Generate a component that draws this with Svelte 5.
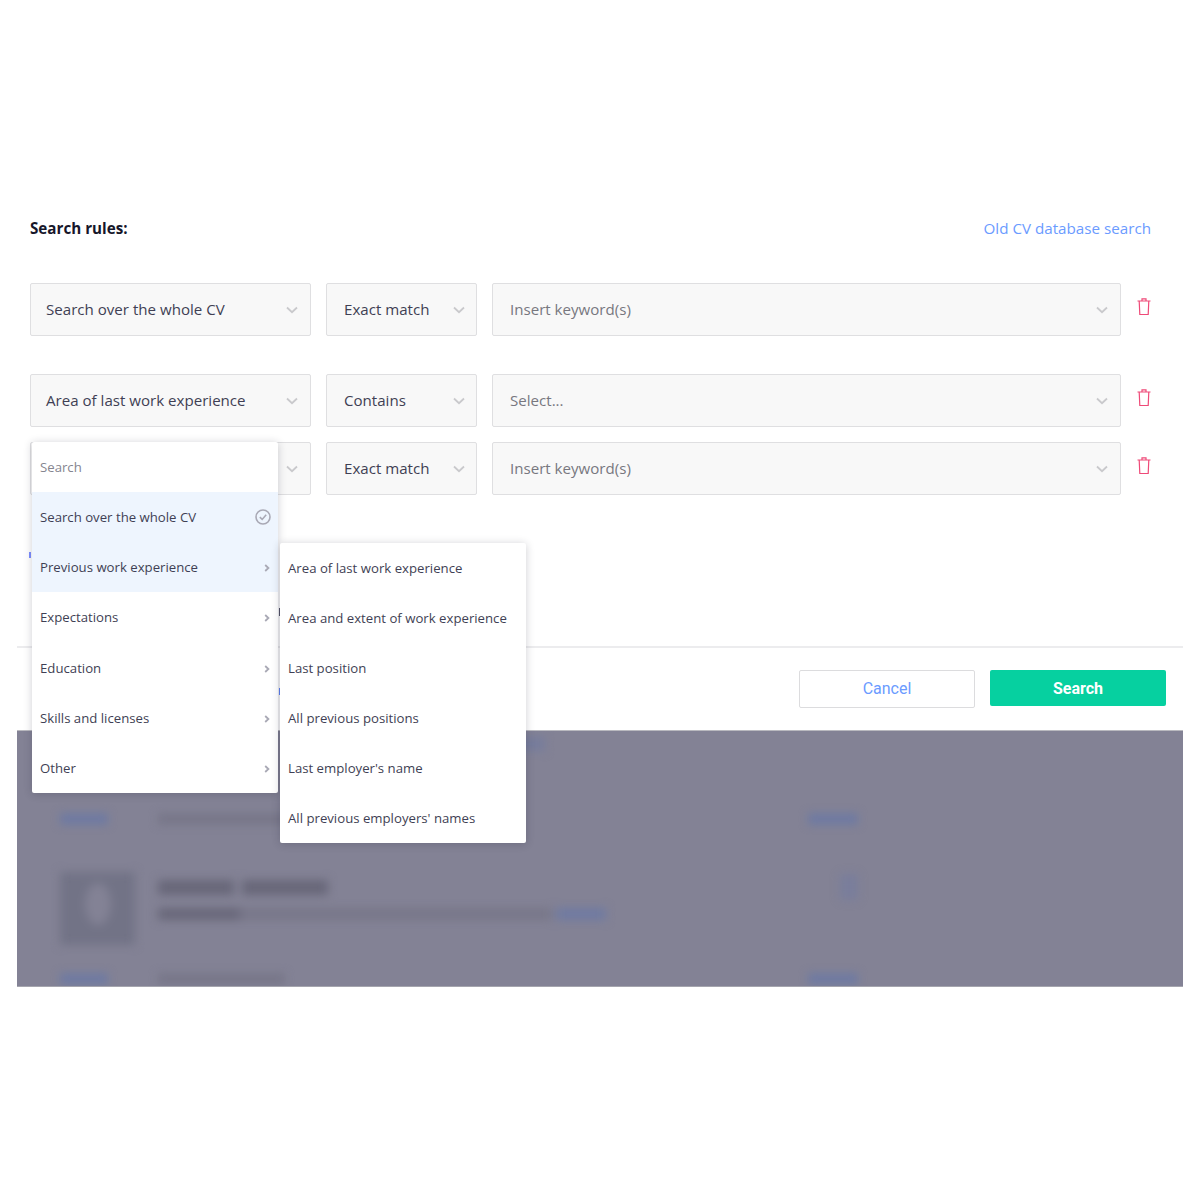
<script>
  const rules = [
    { field: "Search over the whole CV", match: "Exact match", value: "Insert keyword(s)" },
    { field: "Area of last work experience", match: "Contains", value: "Select..." },
    { field: "", match: "Exact match", value: "Insert keyword(s)" }
  ];

  const groups = [
    { label: "Search over the whole CV", selected: true, active: true },
    { label: "Previous work experience", active: true },
    { label: "Expectations" },
    { label: "Education" },
    { label: "Skills and licenses" },
    { label: "Other" }
  ];

  const subItems = [
    "Area of last work experience",
    "Area and extent of work experience",
    "Last position",
    "All previous positions",
    "Last employer's name",
    "All previous employers' names"
  ];

  const blurredRows = [
    { left: 48, middle: 132, right: 50 },
    { left: 48, middle: 127, right: 50 }
  ];
</script>

<div class="page">
  <div class="modal">
    <div class="form">
      <div class="head">
        <h2>Search rules:</h2>
        <a href="#old">Old CV database search</a>
      </div>

      <div class="rules">
        {#each rules as rule}
          <div class="rule">
            <div class="select field">
              <span class="val">{rule.field}</span>
              <svg class="chev" viewBox="0 0 12 8" width="12" height="8"><path d="M1 1.5 6 6.2 11 1.5" /></svg>
            </div>
            <div class="select match">
              <span class="val">{rule.match}</span>
              <svg class="chev" viewBox="0 0 12 8" width="12" height="8"><path d="M1 1.5 6 6.2 11 1.5" /></svg>
            </div>
            <div class="select keywords">
              <span class="placeholder">{rule.value}</span>
              <svg class="chev" viewBox="0 0 12 8" width="12" height="8"><path d="M1 1.5 6 6.2 11 1.5" /></svg>
            </div>
            <svg class="trash" viewBox="0 0 14 18" width="14" height="18">
              <path d="M0.5 3H13.5M2.2 3 2.8 16.5H11.2L11.8 3M5 3V0.8H9V3" />
            </svg>
          </div>
        {/each}
      </div>

      <!-- bits of the page behind the dropdowns, seen through the gaps -->
      <i class="peek add"></i>
      <i class="peek dark-mark"></i>
      <i class="peek blue-mark"></i>
    </div>

    <div class="footer">
      <button class="cancel">Cancel</button>
      <button class="search">Search</button>
    </div>

    <div class="backdrop">
      <div class="smudge top"></div>
      {#each blurredRows as row, i}
        <div class="blur-row" class:last={i === 1}>
          <i class="bar blue" style="width: {row.left}px"></i>
          <i class="bar grey" style="width: {row.middle}px"></i>
          <i class="bar blue end" style="width: {row.right}px"></i>
        </div>
        {#if i === 0}
          <div class="person">
            <div class="avatar"><div class="face"></div></div>
            <div class="lines">
              <div class="line name">
                <i class="bar dark first"></i>
                <i class="bar dark second"></i>
              </div>
              <div class="line">
                <i class="bar dark label"></i>
                <i class="bar grey text"></i>
                <i class="bar blue more"></i>
              </div>
            </div>
            <i class="bar blue pin"></i>
          </div>
        {/if}
      {/each}
    </div>

    <div class="menu">
      <div class="menu-search">Search</div>
      {#each groups as group}
        <div class="menu-item" class:active={group.active}>
          <span>{group.label}</span>
          {#if group.selected}
            <svg class="check" viewBox="0 0 16 16" width="16" height="16">
              <circle cx="8" cy="8" r="7" />
              <path d="M4.8 8.2 7.2 10.4 11.2 5.8" />
            </svg>
          {:else}
            <svg class="arrow" viewBox="0 0 6 8" width="6" height="8"><path d="M1.2 1 4.4 4 1.2 7" /></svg>
          {/if}
        </div>
      {/each}
    </div>

    <div class="submenu">
      {#each subItems as item}
        <div class="menu-item"><span>{item}</span></div>
      {/each}
    </div>
  </div>
</div>

<style>
  :global(body) {
    background: #fff;
    font-family: "Open Sans", "Liberation Sans", sans-serif;
  }

  .page {
    height: 1200px;
    padding: 205px 17px 0;
    box-sizing: border-box;
  }

  .modal {
    position: relative;
    width: 1166px;
  }

  .form {
    height: 441px;
    padding: 0 32px 0 13px;
    border-bottom: 2px solid #ececee;
    box-sizing: content-box;
    position: relative;
  }

  .head {
    display: flex;
    justify-content: space-between;
    align-items: center;
    height: 46px;
  }

  h2 {
    margin: 0;
    font-size: 15.2px;
    font-weight: 700;
    color: #16162a;
  }

  .head a {
    font-size: 15.2px;
    color: #6b9bff;
    text-decoration: none;
    margin-top: -1px;
  }

  .rules {
    margin-top: 32px;
    display: flex;
    flex-direction: column;
    gap: 15px;
  }

  .rule {
    display: flex;
    gap: 15px;
    align-items: flex-start;
  }

  .rule:first-child {
    margin-bottom: 23px;
  }

  .select {
    height: 53px;
    box-sizing: border-box;
    display: flex;
    align-items: center;
    justify-content: space-between;
    background: #f8f8f8;
    border: 1px solid #dfdfe1;
    border-radius: 2px;
    padding: 0 12px 0 15px;
    font-size: 15.1px;
    color: #3f3f54;
  }

  .val,
  .placeholder {
    margin-top: -2px;
  }

  .field {
    width: 280.5px;
  }

  .match {
    width: 151px;
    padding-left: 17.5px;
    padding-right: 11px;
  }

  .keywords {
    width: 629px;
    padding-left: 17.5px;
  }

  .placeholder {
    color: #77777f;
  }

  .chev {
    fill: none;
    stroke: #c9c9cc;
    stroke-width: 1.8;
  }

  .trash {
    margin: 15px 0 0 1.5px;
    fill: none;
    stroke: #ef4a78;
    stroke-width: 1.2;
  }

  .peek {
    position: absolute;
    display: block;
    width: 2px;
  }

  .add {
    left: 12px;
    top: 347px;
    height: 6px;
    background: #7d8fff;
  }

  .dark-mark {
    left: 262px;
    top: 403px;
    height: 8px;
    background: #55556a;
  }

  .blue-mark {
    left: 262px;
    top: 483px;
    height: 7px;
    background: #5f86ff;
  }

  .footer {
    height: 82px;
    box-sizing: border-box;
    display: flex;
    justify-content: flex-end;
    align-items: flex-start;
    gap: 15px;
    padding: 22px 17px 0 0;
    font-family: Roboto, "Liberation Sans", sans-serif;
  }

  button {
    width: 176px;
    border-radius: 2px;
    font-family: inherit;
    font-size: 16px;
  }

  .cancel {
    height: 38px;
    padding-bottom: 3px;
    background: #fff;
    border: 1px solid #dcdcde;
    color: #6b9bff;
  }

  .search {
    height: 36px;
    background: #06d0a0;
    border: 0;
    color: #fff;
    font-weight: 700;
  }

  .backdrop {
    height: 257px;
    background: #838295;
    border-top: 1px solid #b9b9bf;
    border-bottom: 1px solid #a5a5ae;
    box-sizing: border-box;
    overflow: hidden;
    position: relative;
    padding: 78px 325px 0 43px;
  }

  .smudge {
    position: absolute;
    left: 480px;
    top: 6px;
    width: 48px;
    height: 14px;
    background: #767c9c;
    filter: blur(5px);
  }

  .blur-row {
    display: flex;
    align-items: center;
    height: 20px;
    filter: blur(4px);
  }

  .blur-row.last {
    margin-top: 24px;
  }

  .bar {
    display: block;
    height: 12px;
  }

  .blue {
    background: #6f7aa2;
  }

  .grey {
    background: #787789;
  }

  .dark {
    background: #686779;
  }

  .blur-row .grey {
    margin-left: 50px;
  }

  .end {
    margin-left: auto;
  }

  .person {
    display: flex;
    gap: 23px;
    margin-top: 43px;
    height: 73px;
    filter: blur(5px);
  }

  .avatar {
    width: 75px;
    height: 73px;
    flex: none;
    background: #727386;
    display: flex;
    align-items: center;
    justify-content: center;
  }

  .face {
    width: 26px;
    height: 42px;
    margin-top: -10px;
    border-radius: 50%;
    background: #838295;
  }

  .lines {
    flex: 1;
    padding-top: 8px;
  }

  .line {
    display: flex;
  }

  .name {
    gap: 8px;
    margin-bottom: 13px;
  }

  .first {
    width: 76px;
    height: 15px;
  }

  .second {
    width: 86px;
    height: 15px;
  }

  .label {
    width: 82px;
  }

  .text {
    width: 312px;
  }

  .more {
    width: 50px;
    margin-left: 4px;
  }

  .pin {
    width: 18px;
    height: 26px;
    margin: 2px 0 0 0;
    opacity: 0.5;
  }

  .menu,
  .submenu {
    position: absolute;
    width: 246px;
    background: #fff;
    border-radius: 2px;
    box-shadow: 0 1px 8px rgba(30, 30, 50, 0.22);
    font-size: 13.2px;
    color: #3f3f54;
    white-space: nowrap;
  }

  .menu {
    left: 15px;
    top: 237px;
  }

  .submenu {
    left: 263px;
    top: 337.5px;
  }

  .menu-search {
    height: 50px;
    line-height: 50px;
    padding-left: 8px;
    color: #85858f;
  }

  .menu-item {
    height: 50.2px;
    display: flex;
    align-items: center;
    justify-content: space-between;
    padding: 0 8px;
  }

  .submenu .menu-item {
    height: 50px;
  }

  .menu-item.active {
    background: #eef5fe;
  }

  .check {
    fill: none;
    stroke: #a9a9b5;
    stroke-width: 1.6;
    margin-right: -1px;
  }

  .arrow {
    fill: none;
    stroke: #a9a9b5;
    stroke-width: 1.8;
    margin-top: 2px;
  }
</style>
